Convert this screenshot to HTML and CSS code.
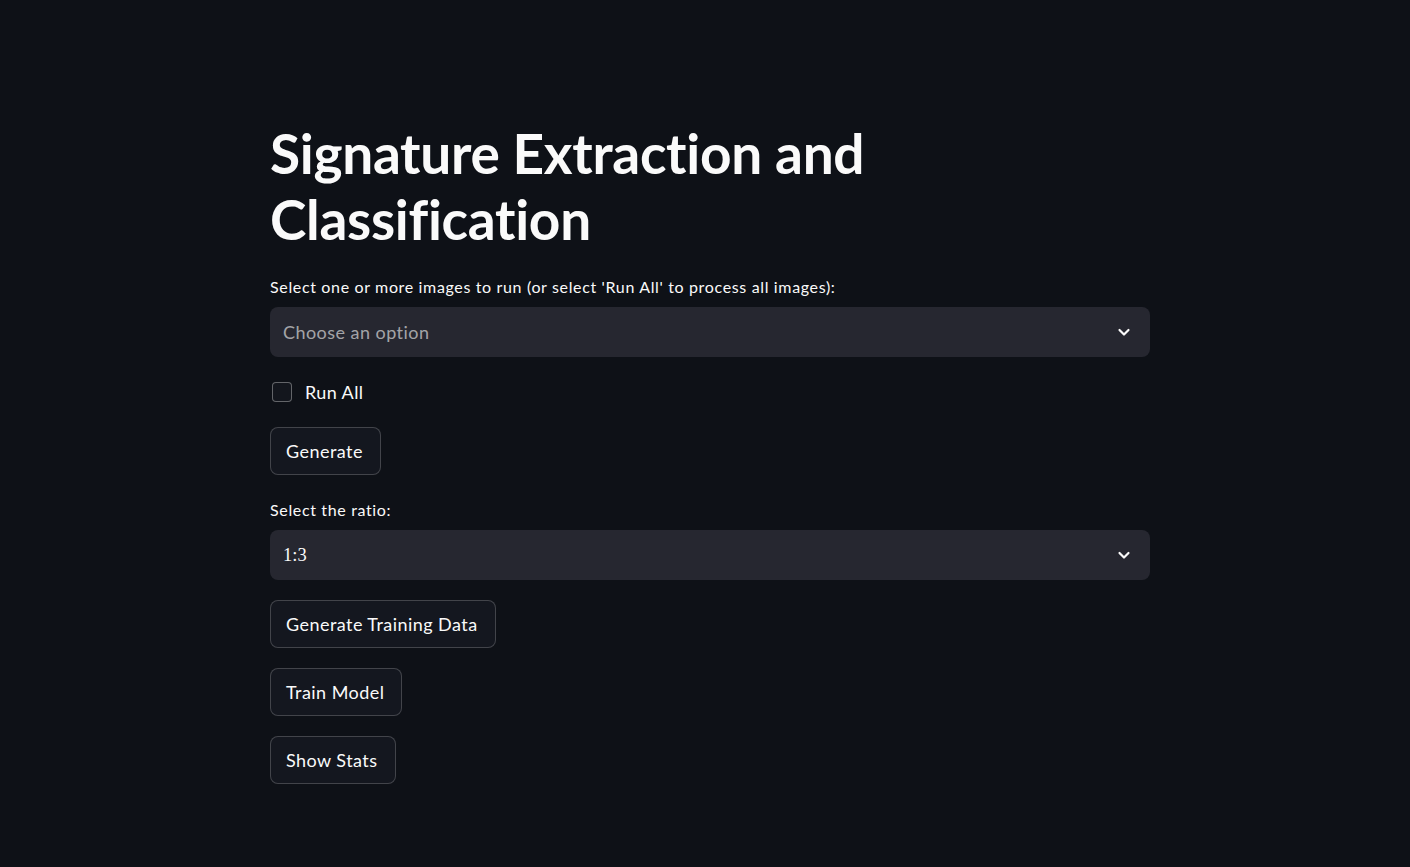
FILE: index.html
```html
<!DOCTYPE html>
<html lang="en">
<head>
<meta charset="utf-8">
<title>Signature Extraction and Classification</title>
<link rel="stylesheet" href="styles.css">
</head>
<body>
<main class="container">
  <h1 class="title">Signature Extraction and<br>Classification</h1>

  <div class="widget">
    <label class="label">Select one or more images to run (or select 'Run All' to process all images):</label>
    <div class="select">
      <span class="placeholder">Choose an option</span>
      <svg class="chevron" width="14" height="14" viewBox="0 0 14 14"><path d="M2.5 5 L7 9.5 L11.5 5" fill="none" stroke="#fafafa" stroke-width="2.2" stroke-linecap="round" stroke-linejoin="round"/></svg>
    </div>
  </div>

  <div class="checkrow">
    <span class="checkbox"></span>
    <span class="checklabel">Run All</span>
  </div>

  <div><button class="btn">Generate</button></div>

  <div class="widget">
    <label class="label">Select the ratio:</label>
    <div class="select">
      <span class="value">1:3</span>
      <svg class="chevron" width="14" height="14" viewBox="0 0 14 14"><path d="M2.5 5 L7 9.5 L11.5 5" fill="none" stroke="#fafafa" stroke-width="2.2" stroke-linecap="round" stroke-linejoin="round"/></svg>
    </div>
  </div>

  <div><button class="btn">Generate Training Data</button></div>
  <div><button class="btn">Train Model</button></div>
  <div><button class="btn">Show Stats</button></div>
</main>
</body>
</html>
```
FILE: styles.css
```css
html, body {
  margin: 0;
  padding: 0;
  background: #0e1117;
  color: #fafafa;
  font-family: "Lato", "Noto Sans", sans-serif;
}
body {
  min-height: 867px;
}
.container {
  width: 880px;
  margin-left: 270px;
  padding-top: 120px;
  display: flex;
  flex-direction: column;
  gap: 20px;
}
.title {
  margin: 0;
  font-size: 55px;
  line-height: 66px;
  font-weight: 700;
  letter-spacing: -0.3px;
}
.widget {
  display: flex;
  flex-direction: column;
}
.label {
  height: 30px;
  line-height: 30px;
  margin-bottom: 5px;
  font-size: 16px;
  letter-spacing: 0.65px;
}
.select {
  height: 50px;
  box-sizing: border-box;
  background: #262730;
  border-radius: 8px;
  display: flex;
  align-items: center;
  justify-content: space-between;
  padding: 0 19px 0 13px;
}
.placeholder {
  font-size: 18px;
  letter-spacing: 0.45px;
  color: rgba(250, 250, 250, 0.6);
}
.value {
  font-family: "Liberation Serif", serif;
  font-size: 18.5px;
  color: #fafafa;
}
.chevron {
  display: block;
}
.checkrow {
  height: 30px;
  display: flex;
  align-items: center;
  gap: 13px;
  padding-left: 2px;
}
.checkbox {
  width: 20px;
  height: 20px;
  box-sizing: border-box;
  border: 1px solid rgba(250, 250, 250, 0.35);
  border-radius: 4px;
  background: #13161d;
}
.checklabel {
  font-size: 18px;
  letter-spacing: 0.4px;
}
.btn {
  height: 48px;
  box-sizing: border-box;
  padding: 0 17px 0 15px;
  background: #14171f;
  color: #fafafa;
  border: 1px solid rgba(250, 250, 250, 0.2);
  border-radius: 8px;
  font-family: inherit;
  font-size: 18px;
  letter-spacing: 0.45px;
}
```
